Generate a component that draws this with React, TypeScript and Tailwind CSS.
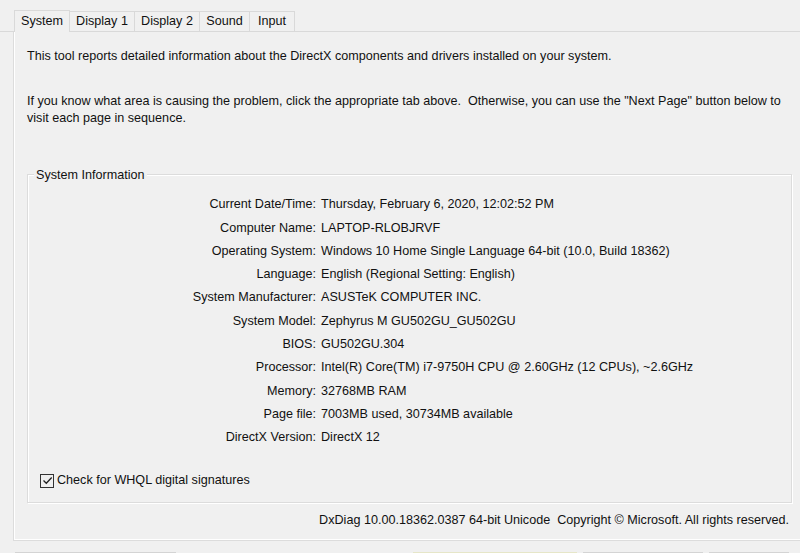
const rows: [string, string][] = [
  ["Current Date/Time:", "Thursday, February 6, 2020, 12:02:52 PM"],
  ["Computer Name:", "LAPTOP-RLOBJRVF"],
  ["Operating System:", "Windows 10 Home Single Language 64-bit (10.0, Build 18362)"],
  ["Language:", "English (Regional Setting: English)"],
  ["System Manufacturer:", "ASUSTeK COMPUTER INC."],
  ["System Model:", "Zephyrus M GU502GU_GU502GU"],
  ["BIOS:", "GU502GU.304"],
  ["Processor:", "Intel(R) Core(TM) i7-9750H CPU @ 2.60GHz (12 CPUs), ~2.6GHz"],
  ["Memory:", "32768MB RAM"],
  ["Page file:", "7003MB used, 30734MB available"],
  ["DirectX Version:", "DirectX 12"],
];

const tabs: { label: string; w: string }[] = [
  { label: "System", w: "w-[56px]" },
  { label: "Display 1", w: "w-[65px]" },
  { label: "Display 2", w: "w-[65px]" },
  { label: "Sound", w: "w-[50px]" },
  { label: "Input", w: "w-[45px]" },
];

function Tab({ label, w, active }: { label: string; w: string; active?: boolean }) {
  if (active) {
    return (
      <div className={`relative z-10 -mb-px flex h-[22px] items-center justify-center border border-b-0 border-[#d9d9d9] bg-[#f0f0f0] ${w}`}>
        {label}
      </div>
    );
  }
  return (
    <div className={`flex h-[20px] items-center justify-center border border-l-0 border-b-0 border-[#d9d9d9] bg-[#f0f0f0] ${w}`}>
      {label}
    </div>
  );
}

export default function App() {
  return (
    <div className="relative h-[553px] w-[800px] overflow-hidden bg-[#f0f0f0] font-['Liberation_Sans',Arial,sans-serif] text-[12.6px] text-[#111]">
      {/* tab strip */}
      <div className="flex items-end border-b border-[#d9d9d9] pl-[14px] pt-[10px]">
        {tabs.map((t, i) => (
          <Tab key={t.label} label={t.label} w={t.w} active={i === 0} />
        ))}
      </div>

      {/* tab page */}
      <div className="ml-[13px] flex h-[509px] flex-col border-b border-l border-[#dcdcdc] pl-[13px] pr-[8px] pt-[16px] shadow-[inset_1px_0_0_#fff,inset_0_-1px_0_#fff]">
        <p className="leading-[16px]">
          This tool reports detailed information about the DirectX components and drivers installed on your system.
        </p>
        <p className="mt-[29px] pr-[4px] leading-[17px]">
          If you know what area is causing the problem, click the appropriate tab above.&nbsp; Otherwise, you can use the "Next Page" button below to visit each page in sequence.
        </p>

        {/* System Information group */}
        <div className="relative mt-[47px] h-[329px] border border-[#dcdcdc] shadow-[inset_1px_1px_0_#fff,1px_1px_0_#fff]">
          <span className="absolute -top-[8px] left-[6px] bg-[#f0f0f0] px-[2px] leading-[16px]">System Information</span>
          <div className="grid grid-cols-[288px_1fr] auto-rows-[23.3px] gap-x-[5px] pt-[18px]">
            {rows.map(([k, v]) => (
              <div key={k} className="contents">
                <div className="flex items-center justify-end">{k}</div>
                <div className="flex items-center">{v}</div>
              </div>
            ))}
          </div>
          <label className="mt-[22px] ml-[12px] flex items-center gap-[3px]">
            <span className="flex h-[14px] w-[14px] items-center justify-center border border-[#333] bg-[#f0f0f0]">
              <svg width="11" height="11" viewBox="0 0 11 11" fill="none" stroke="#222" strokeWidth="1.3">
                <path d="M1.5 5.5 L4.3 8.3 L9.7 2.5" />
              </svg>
            </span>
            Check for WHQL digital signatures
          </label>
        </div>

        <div className="mt-[9px] mr-[3px] text-right leading-[16px]">
          DxDiag 10.00.18362.0387 64-bit Unicode&nbsp; Copyright © Microsoft. All rights reserved.
        </div>
      </div>

      {/* dialog buttons, mostly below the visible edge */}
      <div className="mt-[11px] flex gap-[6px] pl-[15px]">
        <div className="h-[24px] w-[161px] border border-[#d4d4d4] bg-[#fbfbfb]" />
        <div className="ml-[231px] h-[24px] w-[164px] border border-[#e6e6c8] bg-[#fdfde4]" />
        <div className="h-[24px] w-[120px] border border-[#d4d4d4] bg-[#fbfbfb]" />
        <div className="h-[24px] w-[80px] border border-[#d4d4d4] bg-[#fbfbfb]" />
      </div>
    </div>
  );
}
